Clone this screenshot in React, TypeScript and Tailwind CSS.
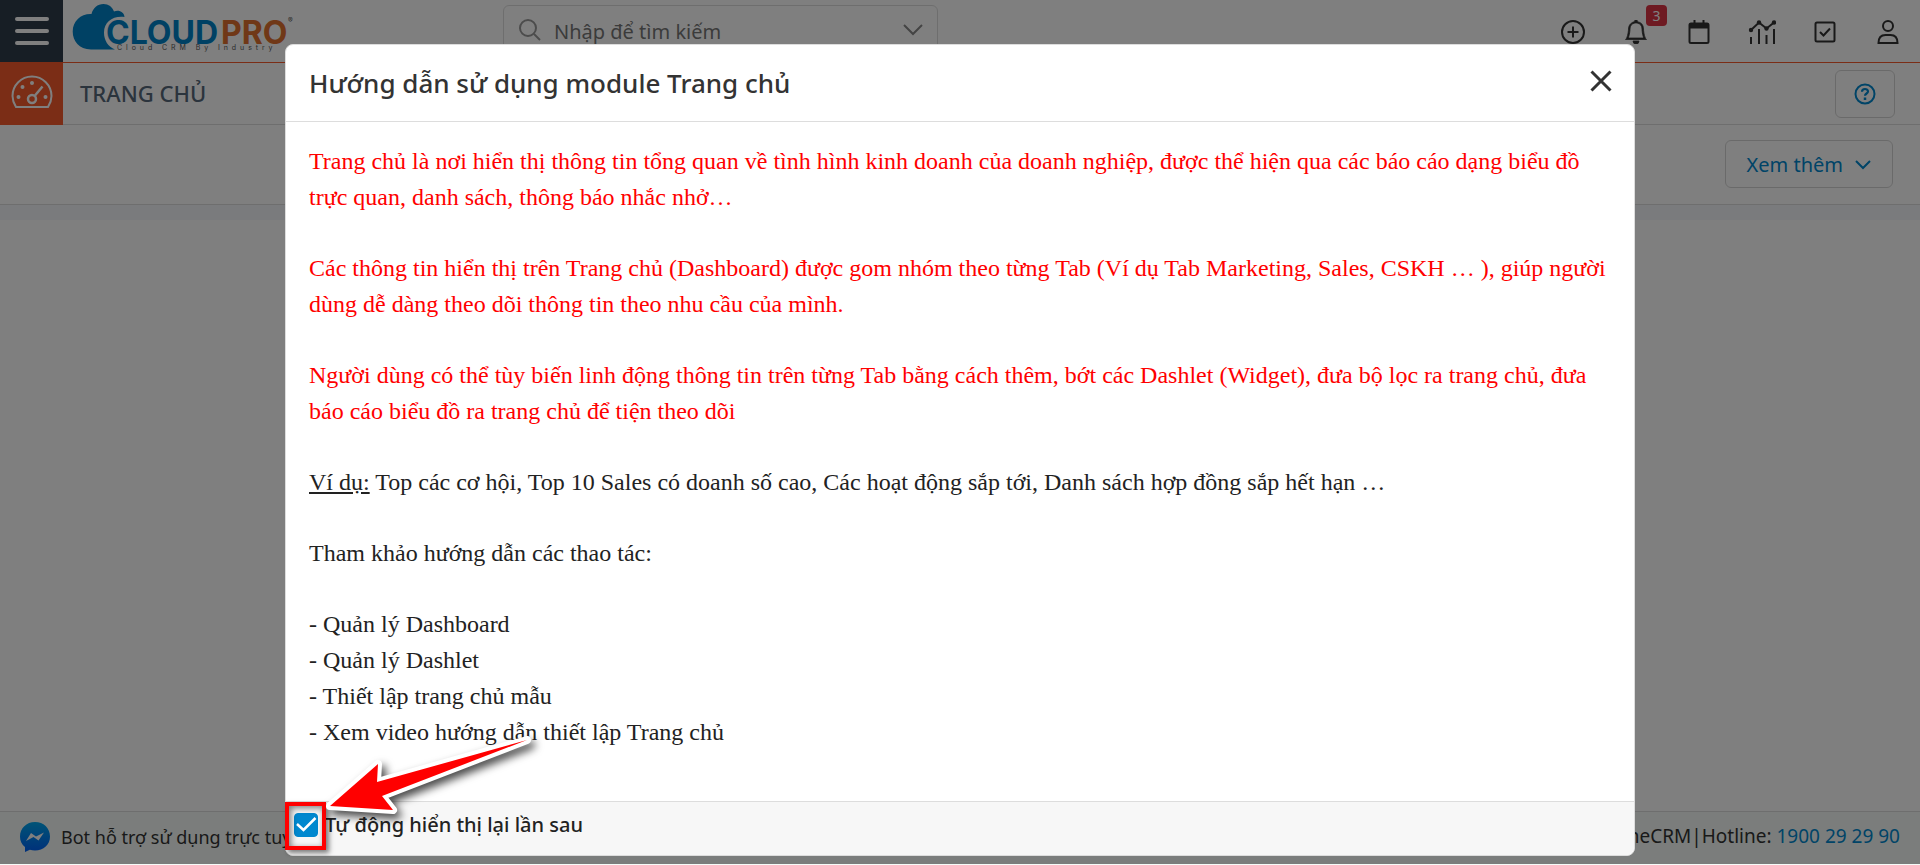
import React, { useState } from 'react';
import { BsBell } from 'react-icons/bs';

const tagline = 'Cloud CRM By Industry'.split('').join('\u00a0\u00a0');

const guides = [
  'Quản lý Dashboard',
  'Quản lý Dashlet',
  'Thiết lập trang chủ mẫu',
  'Xem video hướng dẫn thiết lập Trang chủ',
];

function Logo() {
  return (
    <svg width="228" height="54" viewBox="0 0 228 54" role="img" aria-label="CloudPro" className="shrink-0">
      <path
        d="M44 49.500H20C8 49.500 1.700 41 1.700 31.500 1.700 21 10 13.500 20.500 14 22 8 26.500 4 32.500 4c5 0 9 3 10.500 7.500 5-2 10 .500 10.500 5.500C42 15.500 33 22 33 32.500c0 8 4 14 11 17z"
        fill="#0082c8"
      />
      <text x="35" y="44" fontSize="32" fontWeight="700" fontFamily="Inter, sans-serif" fill="#0082c8">
        CLOUD
      </text>
      <text x="150" y="44" fontSize="32" fontWeight="700" fontFamily="Inter, sans-serif" fill="#e0702e">
        PRO
      </text>
      <text x="46" y="50" fontSize="7" fontFamily="Inter, sans-serif" fill="#555">
        {tagline}
      </text>
      <text x="217" y="23" fontSize="7" fontFamily="Inter, sans-serif" fill="#555">
        ®
      </text>
    </svg>
  );
}

function HeaderIcon({ label, badge, children }: { label: string; badge?: number; children: React.ReactNode }) {
  return (
    <button type="button" aria-label={label} className="relative flex h-8 w-6 items-center justify-center">
      {children}
      {badge && (
        <span className="absolute -top-[11px] left-[22px] flex size-[21px] items-center justify-center rounded bg-[#dc3545] text-sm leading-none text-white">
          {badge}
        </span>
      )}
    </button>
  );
}

function Stroke({ children }: { children: React.ReactNode }) {
  return (
    <svg width="24" height="24" viewBox="0 0 24 24" fill="none" stroke="currentColor" strokeWidth="2">
      {children}
    </svg>
  );
}

function TopBar() {
  return (
    <header className="flex h-[63px] shrink-0 border-b border-[#f65a2c] bg-white">
      <button
        type="button"
        aria-label="Menu"
        className="flex w-[63px] shrink-0 flex-col items-center justify-center gap-2 bg-[#2e3c4a]"
      >
        <span className="h-1 w-[34px] rounded-full bg-white" />
        <span className="h-1 w-[34px] rounded-full bg-white" />
        <span className="h-1 w-[34px] rounded-full bg-white" />
      </button>
      <div className="flex min-w-0 flex-1 items-start pr-5 pl-2">
        <Logo />
        <div className="mt-[5px] ml-[204px] flex h-[50px] w-[435px] items-center gap-3 rounded-md border border-[#ddd] px-[14px]">
          <svg width="24" height="24" viewBox="0 0 24 24" fill="none" stroke="#999" strokeWidth="2">
            <circle cx="10" cy="10" r="8" />
            <path d="M16 16l6 6" />
          </svg>
          <input
            type="text"
            aria-label="Nhập để tìm kiếm"
            placeholder="Nhập để tìm kiếm"
            className="w-0 flex-1 pt-1 text-xl outline-none placeholder:text-[#777]"
          />
          <svg width="20" height="12" viewBox="0 0 20 12" fill="none" stroke="#888" strokeWidth="2">
            <path d="M1 1l9 9 9-9" />
          </svg>
        </div>
        <nav className="mt-4 ml-auto flex gap-[39px] text-[#333]">
          <HeaderIcon label="Thêm mới">
            <Stroke>
              <circle cx="12" cy="12" r="11" />
              <path d="M12 6.500v11M6.500 12h11" />
            </Stroke>
          </HeaderIcon>
          <HeaderIcon label="Thông báo" badge={3}>
            <BsBell size={24} strokeWidth={0.5} />
          </HeaderIcon>
          <HeaderIcon label="Lịch">
            <Stroke>
              <rect x="2.500" y="3.500" width="19" height="19.500" rx="1.500" />
              <path d="M2.500 3.500h19v5h-19z" fill="currentColor" stroke="none" />
              <path d="M7.500 0v4M16.500 0v4" />
            </Stroke>
          </HeaderIcon>
          <HeaderIcon label="Báo cáo">
            <svg width="28" height="24" viewBox="0 0 28 24" fill="none" stroke="currentColor" strokeWidth="2" className="shrink-0">
              <path d="M3 10l8-7.500 7.500 6L26 2.500M3 17v7M11 9v15M18.500 15v9M26 9v15" />
              <g fill="currentColor" stroke="none">
                <circle cx="3" cy="10" r="2.200" />
                <circle cx="11" cy="2.500" r="2.200" />
                <circle cx="18.500" cy="8.500" r="2.200" />
                <circle cx="26" cy="2.500" r="2.200" />
              </g>
            </svg>
          </HeaderIcon>
          <HeaderIcon label="Công việc">
            <Stroke>
              <rect x="2.500" y="2.500" width="19" height="19" rx="1.500" />
              <path d="M7 12l3.500 3.500L17 8.500" />
            </Stroke>
          </HeaderIcon>
          <HeaderIcon label="Tài khoản">
            <Stroke>
              <circle cx="12" cy="6" r="5" />
              <path d="M2.500 23c0-5.500 3-8 7-8h5c4 0 7 2.500 7 8z" />
            </Stroke>
          </HeaderIcon>
        </nav>
      </div>
    </header>
  );
}

function ModuleBar() {
  return (
    <div className="flex h-[62px] shrink-0 bg-white">
      <div className="flex w-[63px] items-center justify-center bg-[#f65a2c] pb-1">
        <svg width="42" height="34" viewBox="0 0 42 34" fill="none" stroke="#fff" strokeWidth="2">
          <path d="M5 32C2.500 28 1.500 25 1.500 21a19.500 19.500 0 0 1 39 0c0 4-1 7-3.500 11z" />
          <circle cx="21" cy="24" r="4" strokeWidth="2.500" />
          <path d="M24 20.500l7.500-9" strokeWidth="2.500" />
          <g fill="#fff" stroke="none">
            <circle cx="7.500" cy="22" r="2" />
            <circle cx="11.500" cy="12" r="2" />
            <circle cx="21" cy="8" r="2" />
            <circle cx="34.500" cy="22" r="2" />
          </g>
        </svg>
      </div>
      <div className="flex flex-1 items-center justify-between border-b border-[#ddd] pr-[25px] pl-[17px]">
        <h1 className="text-[22px] font-medium text-[#56687a]">TRANG CHỦ</h1>
        <button
          type="button"
          aria-label="Trợ giúp"
          className="flex h-12 w-15 items-center justify-center rounded-md border border-[#d5d5d5] text-[#0088cf]"
        >
          <svg width="22" height="22" viewBox="0 0 22 22" fill="none" stroke="currentColor" strokeWidth="2">
            <circle cx="11" cy="11" r="9.500" />
            <path d="M8 8.800c0-3.800 6-3.600 6-.300 0 2-3 2-3 4.300" strokeWidth="2.200" />
            <path d="M11 14.500v2.500" strokeWidth="2.500" />
          </svg>
        </button>
      </div>
    </div>
  );
}

function PageFooter() {
  return (
    <footer className="flex h-[54px] shrink-0 items-center justify-between border-t border-[#ddd] bg-[#f6fbf8] px-5 pb-1 text-lg text-[#333]">
      <a href="#bot" className="flex items-center gap-[11px]">
        <svg width="30" height="30" viewBox="0 0 30 30">
          <defs>
            <linearGradient id="messenger" x1="0" y1="0" x2="0" y2="1">
              <stop offset="0" stopColor="#00a8ee" />
              <stop offset="1" stopColor="#0060f5" />
            </linearGradient>
          </defs>
          <path
            d="M15 0C6.500 0 0 6.200 0 14.500c0 4.400 1.800 8 5 10.500v5l4.800-2.300c1.600.500 3.400.700 5.200.700 8.500 0 15-5.700 15-14S23.500 0 15 0z"
            fill="url(#messenger)"
          />
          <path d="M6 19l5-8 5 3.500 8-4-5.500 8-5-3.500z" fill="#fff" />
        </svg>
        Bot hỗ trợ sử dụng trực tuyến
      </a>
      <p className="text-[19px]">
        OnlineCRM|Hotline:{' '}
        <a href="tel:1900292990" className="text-[#0088cf]">
          1900 29 29 90
        </a>
      </p>
    </footer>
  );
}

function GuideModal() {
  const [autoShow, setAutoShow] = useState(true);

  return (
    <div
      role="dialog"
      aria-labelledby="guide-title"
      className="mx-auto mt-11 max-w-[1350px] rounded-lg border border-[#ddd] bg-white"
    >
      <div className="flex h-[77px] items-center justify-between border-b border-[#ddd] pr-[22px] pl-[23px]">
        <h2 id="guide-title" className="text-[26px] font-medium text-[#333]">
          Hướng dẫn sử dụng module Trang chủ
        </h2>
        <button type="button" aria-label="Đóng" className="pb-1 text-[#333]">
          <svg width="22" height="22" viewBox="0 0 22 22" fill="none" stroke="currentColor" strokeWidth="3">
            <path d="M1.500 1.500l19 19M20.500 1.500l-19 19" />
          </svg>
        </button>
      </div>

      <div className="flex flex-col gap-[35px] px-[23px] pt-[21px] pb-[51px] font-['Liberation_Serif',serif] text-2xl leading-9 text-[#222]">
        <p className="text-[red]">
          Trang chủ là nơi hiển thị thông tin tổng quan về tình hình kinh doanh của doanh nghiệp, được thể hiện qua các
          báo cáo dạng biểu đồ trực quan, danh sách, thông báo nhắc nhở…
        </p>
        <p className="text-[red]">
          Các thông tin hiển thị trên Trang chủ (Dashboard) được gom nhóm theo từng Tab (Ví dụ Tab Marketing, Sales,
          CSKH … ), giúp người dùng dễ dàng theo dõi thông tin theo nhu cầu của mình.
        </p>
        <p className="text-[red]">
          Người dùng có thể tùy biến linh động thông tin trên từng Tab bằng cách thêm, bớt các Dashlet (Widget), đưa bộ
          lọc ra trang chủ, đưa báo cáo biểu đồ ra trang chủ để tiện theo dõi
        </p>
        <p>
          <u>Ví dụ:</u> Top các cơ hội, Top 10 Sales có doanh số cao, Các hoạt động sắp tới, Danh sách hợp đồng sắp hết
          hạn …
        </p>
        <p>Tham khảo hướng dẫn các thao tác:</p>
        <ul>
          {guides.map((guide) => (
            <li key={guide}>- {guide}</li>
          ))}
        </ul>
      </div>

      <div className="relative flex h-[54px] items-start rounded-b-lg border-t border-[#ddd] bg-[#f7f7f7] pt-[11px] pl-2">
        <label className="flex h-6 items-center gap-[7px] text-xl font-medium text-[#222]">
          <span className="grid size-6">
            <input
              type="checkbox"
              checked={autoShow}
              onChange={() => setAutoShow(!autoShow)}
              className="col-start-1 row-start-1 size-6 appearance-none rounded border border-[#0088cf] checked:bg-[#0088cf]"
            />
            {autoShow && (
              <svg
                viewBox="0 0 24 24"
                fill="none"
                stroke="#fff"
                strokeWidth="2.500"
                className="pointer-events-none col-start-1 row-start-1 size-6"
              >
                <path d="M3 11l6.500 6L21.500 5" />
              </svg>
            )}
          </span>
          Tự động hiển thị lại lần sau
        </label>

        {/* callout pointing at the checkbox */}
        <div className="pointer-events-none absolute top-0 -left-px h-12 w-[41px] border-4 border-[red] shadow-[3px_3px_5px_rgba(0,0,0,0.5),inset_2px_2px_6px_rgba(0,0,0,0.5)]" />
        <svg
          width="220"
          height="95"
          viewBox="0 0 220 95"
          className="pointer-events-none absolute -top-[70px] left-9 overflow-visible drop-shadow-[4px_5px_4px_rgba(0,0,0,0.7)]"
        >
          <path
            d="M8 74L56 32L55 50L205 8L60 64L71 78z"
            fill="red"
            stroke="#fff"
            strokeWidth="8"
            strokeLinejoin="round"
            paintOrder="stroke"
          />
        </svg>
      </div>
    </div>
  );
}

export default function App() {
  return (
    <div className="flex min-h-screen flex-col bg-white font-['Noto_Sans',sans-serif]">
      <TopBar />
      <ModuleBar />
      <div className="flex h-20 shrink-0 items-start justify-end border-b border-[#ddd] bg-white pt-[15px] pr-[27px]">
        <button
          type="button"
          className="flex h-12 items-center gap-3 rounded-md border border-[#d5d5d5] px-[21px] pt-0.5 text-xl text-[#0088cf]"
        >
          Xem thêm
          <svg width="16" height="10" viewBox="0 0 16 10" fill="none" stroke="currentColor" strokeWidth="2">
            <path d="M1 1l7 7 7-7" />
          </svg>
        </button>
      </div>
      <main className="flex-1 border-t-[15px] border-[#f5f7fa] bg-white" />
      <PageFooter />

      <div className="fixed inset-x-0 top-0 bottom-px bg-black/50">
        <GuideModal />
      </div>
    </div>
  );
}
